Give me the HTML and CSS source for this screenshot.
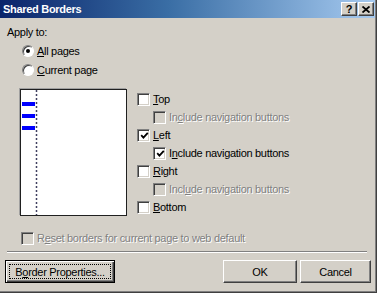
FILE: index.html
```html
<!DOCTYPE html>
<html lang="en">
<head>
  <meta charset="UTF-8">
  <title>Shared Borders</title>
  <link rel="stylesheet" href="styles.css">
</head>
<body>

  <div class="window">
    <div class="titlebar">
      <span class="title">Shared Borders</span>
      <span class="cap-btn help">?</span>
      <span class="cap-btn close">
        <svg width="8" height="7" viewBox="0 0 8 7">
          <path d="M0.5 0.5 L7.5 6.5 M7.5 0.5 L0.5 6.5" stroke="#000" stroke-width="1.8" fill="none"/>
        </svg>
      </span>
    </div>

    <div class="dialog">
      <div class="apply">Apply to:</div>
      <div class="radio-row"><span class="radio on"></span><span><u>A</u>ll pages</span></div>
      <div class="radio-row"><span class="radio"></span><span><u>C</u>urrent page</span></div>

      <div class="borders">
        <div class="preview">
          <svg width="105" height="125" viewBox="0 0 105 125">
            <line x1="15.5" y1="0" x2="15.5" y2="125" stroke="#404060" stroke-width="1.5" stroke-dasharray="2 2"/>
            <rect x="1" y="12" width="13" height="4" fill="#0000ff"/>
            <rect x="1" y="24" width="13" height="4" fill="#0000ff"/>
            <rect x="1" y="36" width="13" height="4" fill="#0000ff"/>
          </svg>
        </div>

        <div class="options">
          <div class="check-row"><span class="check"></span><span><u>T</u>op</span></div>
          <div class="check-row sub disabled"><span class="check"></span><span class="dim">In<u>c</u>lude navigation buttons</span></div>
          <div class="check-row"><span class="check on"><svg width="9" height="9" viewBox="0 0 9 9"><path d="M1.2 4.2 L3.4 6.6 L7.8 1.8" stroke="#000" stroke-width="1.8" fill="none"/></svg></span><span><u>L</u>eft</span></div>
          <div class="check-row sub"><span class="check on"><svg width="9" height="9" viewBox="0 0 9 9"><path d="M1.2 4.2 L3.4 6.6 L7.8 1.8" stroke="#000" stroke-width="1.8" fill="none"/></svg></span><span>I<u>n</u>clude navigation buttons</span></div>
          <div class="check-row"><span class="check"></span><span><u>R</u>ight</span></div>
          <div class="check-row sub disabled"><span class="check"></span><span class="dim">Incl<u>u</u>de navigation buttons</span></div>
          <div class="check-row"><span class="check"></span><span><u>B</u>ottom</span></div>
        </div>
      </div>

      <div class="check-row reset disabled"><span class="check"></span><span class="dim">R<u>e</u>set borders for current page to web default</span></div>

      <div class="separator"></div>

      <div class="buttons">
        <button class="btn default"><span class="focus">B<u>o</u>rder Properties...</span></button>
        <span class="spacer"></span>
        <button class="btn ok">OK</button>
        <button class="btn cancel">Cancel</button>
      </div>
    </div>
  </div>

</body>
</html>
```

FILE: styles.css
```css
body {
  margin: 0;
  padding: 0;
  font-family: "Liberation Sans", Arial, sans-serif;
  font-size: 11px;
  letter-spacing: -0.3px;
  color: #000;
  background-color: #d4d0c8;
}

.window {
  width: 377px;
  height: 293px;
  box-sizing: border-box;
  background-color: #d4d0c8;
  border-right: 1px solid #404040;
  border-bottom: 1px solid #404040;
  box-shadow: inset -1px -1px #808080;
  overflow: hidden;
}

.titlebar {
  height: 18px;
  margin-right: 1px;
  display: flex;
  align-items: center;
  background: linear-gradient(to right, #0a246a, #3a6ea5 45%, #a6caf0);
}

.title {
  flex: 1;
  padding-left: 3px;
  color: #fff;
  font-weight: bold;
  line-height: 18px;
}

.cap-btn {
  width: 16px;
  height: 14px;
  box-sizing: border-box;
  display: flex;
  align-items: center;
  justify-content: center;
  background-color: #d4d0c8;
  border: 1px solid;
  border-color: #fff #404040 #404040 #fff;
  box-shadow: inset -1px -1px #808080;
  font-weight: bold;
  font-size: 11px;
  line-height: 12px;
  letter-spacing: 0;
}

.cap-btn.close {
  margin-left: 1px;
  margin-right: 1px;
}

.dialog {
  padding: 0 7px;
}

.apply {
  margin-top: 7px;
  line-height: 14px;
}

.radio-row {
  display: flex;
  align-items: center;
  gap: 3px;
  height: 14px;
  margin-top: 5px;
  margin-left: 15px;
}

.radio {
  position: relative;
  width: 12px;
  height: 12px;
  box-sizing: border-box;
  border-radius: 50%;
  background-color: #fff;
  border: 1px solid;
  border-color: #808080 #fff #fff #808080;
  box-shadow: inset 1px 1px #404040;
}

.radio.on::after {
  content: "";
  position: absolute;
  left: 3px;
  top: 3px;
  width: 4px;
  height: 4px;
  border-radius: 50%;
  background-color: #000;
}

.borders {
  display: flex;
  gap: 10px;
  margin-top: 12px;
  margin-left: 13px;
}

.preview {
  width: 107px;
  height: 127px;
  box-sizing: border-box;
  background-color: #fff;
  border: 1px solid #202020;
  box-shadow: -1px -1px 0 #a0a0a0;
}

.preview svg {
  display: block;
}

.options {
  padding-top: 1px;
}

.check-row {
  display: flex;
  align-items: center;
  gap: 3px;
  height: 18px;
}

.check-row.sub {
  margin-left: 16px;
}

.check {
  width: 13px;
  height: 13px;
  box-sizing: border-box;
  display: flex;
  align-items: center;
  justify-content: center;
  background-color: #fff;
  border: 1px solid;
  border-color: #808080 #fff #fff #808080;
  box-shadow: inset 1px 1px #404040, inset -1px -1px #d4d0c8;
}

.check svg {
  margin-left: 1px;
  margin-top: 1px;
}

.disabled .check {
  background-color: #d4d0c8;
}

.dim {
  color: #808080;
  text-shadow: 1px 1px 0 #fff;
}

.check-row.reset {
  height: 14px;
  margin-top: 15px;
  margin-left: 14px;
}

.separator {
  height: 0;
  margin-top: 6px;
  margin-right: 2px;
  border-top: 1px solid #808080;
  border-bottom: 1px solid #fff;
}

.buttons {
  display: flex;
  gap: 3px;
  margin: 7px -2px 0 -2px;
}

.spacer {
  flex: 1;
}

.btn {
  height: 23px;
  padding: 0;
  box-sizing: border-box;
  font-family: inherit;
  font-size: 11px;
  letter-spacing: -0.3px;
  color: #000;
  background-color: #d4d0c8;
  border: 1px solid;
  border-color: #fff #404040 #404040 #fff;
  box-shadow: inset -1px -1px #808080, inset 1px 1px #d4d0c8;
}

.btn.default {
  width: 110px;
  border: 1px solid #000;
  box-shadow: inset 1px 1px #fff, inset -1px -1px #404040, inset -2px -2px #808080;
  padding: 3px;
  display: flex;
}

.focus {
  flex: 1;
  display: flex;
  align-items: center;
  justify-content: center;
  border: 1px dotted #000;
}

.btn.ok {
  width: 74px;
}

.btn.cancel {
  width: 71px;
}
```
